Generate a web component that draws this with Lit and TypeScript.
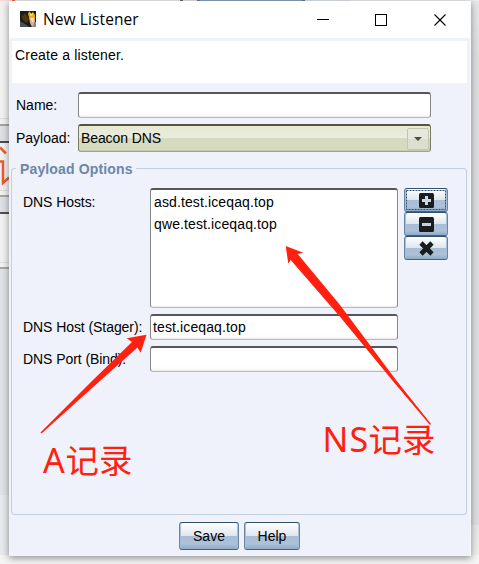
import { LitElement, html, css, svg } from "lit";
import { customElement } from "lit/decorators.js";

@customElement("app-root")
export class AppRoot extends LitElement {
  static styles = css`
    :host {
      display: block;
      position: relative;
      box-sizing: border-box;
      width: 479px;
      height: 564px;
      padding: 1px 8px 8px 9px;
      overflow: hidden;
      background: linear-gradient(#e6e7e8 0, #dcdee0 60px, #dcdee0 525px, #e7e7e7 525px, #f0f0f0 564px);
      font: 14px/16px "Liberation Sans", Arial, sans-serif;
      color: #000;
    }
    * { box-sizing: border-box; }
    .backdrop { position: absolute; left: 0; top: 0; }
    .window {
      position: relative;
      width: 462px;
      height: 555px;
      display: flex;
      flex-direction: column;
      background: #eff2fa;
      box-shadow: 0 2px 7px rgba(0, 0, 0, 0.42);
      border-right: 1px solid #f8f9fc;
    }
    .titlebar {
      height: 37px;
      flex: none;
      background: #fff;
      display: flex;
      align-items: center;
      padding-left: 11px;
    }
    .title {
      font: 15.5px/20px "Open Sans", "Noto Sans", sans-serif;
      margin: -1px 0 0 7px;
      flex: 1;
      letter-spacing: 0.1px;
    }
    .controls { display: flex; gap: 46px; padding-right: 24px; }
    .controls svg:last-child { margin-left: 1px; }
    .controls svg, .logo { display: block; }
    .logo { margin-top: -1px; }
    .desc {
      margin: 3px 3px 0;
      height: 42px;
      flex: none;
      background: #fff;
      padding: 6px 3px;
      letter-spacing: 0.18px;
    }
    .form {
      display: grid;
      grid-template-columns: 62px 353px;
      row-gap: 6px;
      margin: 9px 0 0 7px;
      align-items: center;
    }
    .field {
      height: 26px;
      background: linear-gradient(#fff 80%, #f6f6f6);
      border: 1px solid #85868a;
      border-top: 2px solid #55565a;
      border-bottom-color: #b7b9be;
      border-radius: 3px;
      padding: 3px 2px;
      letter-spacing: 0.12px;
      box-shadow: inset 0 -1px 0 #eee;
    }
    .combo {
      height: 28px;
      display: flex;
      align-items: center;
      justify-content: space-between;
      padding: 0 1px 0 2px;
      border: 1px solid #777d65;
      border-top: 2px solid #515640;
      border-bottom-color: #9ea488;
      border-radius: 3px;
      background: linear-gradient(#e5e8d4, #eaecdd 48%, #d5d9bd 50%, #d7dbbf);
      box-shadow: inset 0 -1px 0 #c7ccae;
      letter-spacing: -0.1px;
    }
    .combo > span:first-child { margin-top: -1px; }
    .drop {
      width: 22px;
      height: 22px;
      border: 1px solid #c2c5b1;
      border-radius: 2px;
      background: linear-gradient(#e6e8db 50%, #dcdfcd 50%);
      display: flex;
      align-items: center;
      justify-content: center;
    }
    .options {
      margin: 8px 3px 0 2px;
      height: 355px;
      flex: none;
      display: flex;
      flex-direction: column;
    }
    .legend { display: flex; height: 18px; }
    .legend i { border-top: 1px solid #c3cfdf; margin-top: 8px; }
    .legend i:first-child { width: 5px; border-left: 1px solid #c3cfdf; border-top-left-radius: 4px; }
    .legend i:last-child { flex: 1; border-right: 1px solid #c3cfdf; border-top-right-radius: 4px; }
    .legend b { color: #6b87a8; padding: 1px 3px 0 4px; letter-spacing: 0.14px; }
    .group {
      flex: 1;
      border: 1px solid #c3cfdf;
      border-top: 0;
      border-radius: 0 0 4px 4px;
      padding: 10px 0 0 11px;
      display: grid;
      grid-template-columns: 127px 248px 44px;
      grid-template-rows: 120px 26px 26px;
      row-gap: 6px;
      align-items: center;
    }
    .group > span { letter-spacing: -0.07px; }
    .group .top { align-self: start; padding-top: 6px; }
    .list {
      height: 120px;
      background: #fff;
      border: 1px solid #85868a;
      border-top: 2px solid #55565a;
      border-bottom-color: #b7b9be;
      border-radius: 3px;
      padding: 1px 3px;
      line-height: 22px;
      letter-spacing: 0.12px;
      box-shadow: inset 0 -1px 0 #eee;
    }
    .tools { align-self: start; margin-left: 6px; width: 44px; }
    .btn {
      display: flex;
      align-items: center;
      justify-content: center;
      border: 1px solid #6884a3;
      border-top-color: #33516f;
      border-bottom-color: #47617e;
      border-radius: 3px;
      background: linear-gradient(#fff, #dfe6ef 49%, #a8bdd6 51%, #adc1d9 80%, #8eaac7);
      box-shadow: inset 1px 0 0 #a9bfd5, inset -1px 0 0 #a9bfd5;
    }
    .tools .btn { height: 24px; position: relative; }
    .focus { position: absolute; left: 1px; top: 1px; }
    .actions { display: flex; justify-content: center; gap: 5px; margin-top: 7px; }
    .actions .btn { height: 28px; }
    .save { width: 60px; }
    .help { width: 56px; }
    .notes { position: absolute; left: 0; top: 0; }
    .notes text { fill: #ff2010; }
    .latin { font: 34px "Noto Sans", sans-serif; }
    .han { font: 400 33.4px "Noto Sans CJK SC", sans-serif; }
  `;

  private backdrop() {
    return html`<svg class="backdrop" width="479" height="564" shape-rendering="crispEdges">
      ${svg`
      <rect width="9" height="564" fill="#f1f1f1"/>
      <rect y="118" width="9" height="1" fill="#ddd"/>
      <rect y="119" width="9" height="1" fill="#eee"/>
      <rect y="124" width="9" height="2" fill="#a3a3a3"/>
      <rect y="126" width="9" height="15" fill="#dde1e6"/>
      <rect y="141" width="9" height="2" fill="#4d4d4d"/>
      <g shape-rendering="auto" fill="none" stroke="#e95c34" stroke-width="2.500">
        <path d="M0 147.500 L6 153.500 M0 161.500 H3 V183 L9 177.500"/>
      </g>
      <rect y="190" width="9" height="1" fill="#ddd"/>
      <rect y="195" width="9" height="2" fill="#a8a8a8"/>
      <rect y="197" width="9" height="15" fill="#dde1e6"/>
      <rect y="212" width="9" height="2" fill="#505050"/>
      <rect y="262" width="9" height="1" fill="#ddd"/>
      <rect y="267" width="9" height="2" fill="#a8a8a8"/>
      <rect y="269" width="9" height="226" fill="#dfe3e7"/>
      <rect y="495" width="9" height="60" fill="#e6eaec"/>
      <rect y="555" width="479" height="9" fill="#f4f4f4"/>
      <rect width="479" height="1" fill="#eee"/>
      <rect width="12" height="1" fill="#fad9d0"/>
      <rect x="12" width="3" height="1" fill="#ee6040"/>
      <rect x="180" width="3" height="1" fill="#6d6d70"/>
      <rect x="183" width="14" height="1" fill="#e2e6ec"/>
      <rect x="197" width="108" height="1" fill="#86a0bf"/>
      <rect x="197" width="3" height="1" fill="#607d9e"/>
      <rect x="302" width="3" height="1" fill="#607d9e"/>
      <rect x="305" width="45" height="1" fill="#dfe4ec"/>`}
    </svg>`;
  }

  private annotations() {
    return html`<svg class="notes" width="479" height="564">
      ${svg`
      <g fill="#ff2010">
        <path d="M146.500 334.700 L126.700 338.300 L132 342 L93 380 L40.500 432.500 L41.500 433.500 L101 380 L137.500 347.500 L140.700 352.700Z"/>
        <path d="M285.700 246 L303.300 252.700 L297.700 254 L340 305 L396 380 L431 424 L430 425 L392 380 L340 316.700 L290.700 260 L288.300 263.500Z"/>
      </g>
      <text y="473"><tspan class="latin" x="43">A</tspan><tspan class="han" x="65.500">记录</tspan></text>
      <text y="452"><tspan class="latin" x="322.500">N</tspan><tspan class="latin" x="349.500">S</tspan><tspan class="han" x="368.500">记录</tspan></text>`}
    </svg>`;
  }

  render() {
    return html`
      ${this.backdrop()}
      <div class="window">
        <div class="titlebar">
          <svg class="logo" width="16" height="16" viewBox="0 0 16 16">
            <rect width="16" height="16" fill="#1c1d1b"/>
            <path d="M1 3 L3 5 L5 2 L7 5 L9 8 L7 12 L3 9Z" fill="#4d3a0c"/>
            <path d="M0 10 L5 13 L9 16 H0Z" fill="#45525b"/>
            <path d="M8 3 L9 0 L11 3 L13 1 L15 4 V9 L12 6 L9 6Z" fill="#f4a814"/>
            <path d="M10 1 L11 3 L13 2 L13 4 L10 5Z" fill="#ffe044"/>
            <path d="M9 6 L13 6 L15 9 V15 L12 16 L10 12Z" fill="#e0b096"/>
            <path d="M10 7 L14 7 L13 12Z" fill="#f8dfc6"/>
            <path d="M14 11 H16 V16 H13Z" fill="#7b8b8f"/>
          </svg>
          <span class="title">New Listener</span>
          <div class="controls">
            <svg width="12" height="12"><path d="M0 5.500H12" stroke="#000"/></svg>
            <svg width="12" height="12"><rect x=".5" y=".5" width="11" height="11" fill="none" stroke="#000"/></svg>
            <svg width="12" height="12"><path d="M.5 .5L11.500 11.500M11.500 .5L.5 11.500" stroke="#000" stroke-width="1.100"/></svg>
          </div>
        </div>
        <div class="desc">Create a listener.</div>
        <div class="form">
          <span>Name:</span><div class="field"></div>
          <span>Payload:</span>
          <div class="combo">
            <span>Beacon DNS</span>
            <span class="drop"><svg width="8" height="4"><path d="M0 0H8L4 4Z" fill="#4b4c45"/></svg></span>
          </div>
        </div>
        <div class="options">
          <div class="legend"><i></i><b>Payload Options</b><i></i></div>
          <div class="group">
            <span class="top">DNS Hosts:</span>
            <div class="list"><div>asd.test.iceqaq.top</div><div>qwe.test.iceqaq.top</div></div>
            <div class="tools">
              <div class="btn">
                <svg class="focus" width="40" height="20"><rect x=".5" y=".5" width="39" height="19" fill="none" stroke="#31506f" stroke-dasharray="2 1"/></svg>
                <svg width="15" height="15"><rect width="15" height="15" rx="1.500" fill="#1b1c1d"/><path d="M7.500 3V12M3 7.500H12" stroke="#c9d7e6" stroke-width="3"/></svg>
              </div>
              <div class="btn">
                <svg width="15" height="15"><rect width="15" height="15" rx="1.500" fill="#1b1c1d"/><path d="M3 7.500H12" stroke="#c3d2e3" stroke-width="3"/></svg>
              </div>
              <div class="btn">
                <svg width="15" height="15"><path d="M2 2L13 13M13 2L2 13" stroke="#1b1c1d" stroke-width="4.600"/></svg>
              </div>
            </div>
            <span>DNS Host (Stager):</span><div class="field">test.iceqaq.top</div><span></span>
            <span>DNS Port (Bind):</span><div class="field"></div><span></span>
          </div>
        </div>
        <div class="actions"><div class="btn save">Save</div><div class="btn help">Help</div></div>
      </div>
      ${this.annotations()}
    `;
  }
}
